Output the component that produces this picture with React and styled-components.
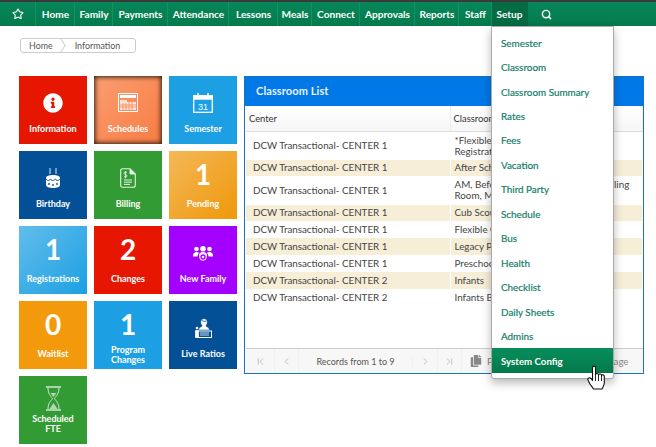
import React from "react";
import styled, { createGlobalStyle } from "styled-components";
import { Star, Search, ChevronLeft, ChevronRight, ChevronFirst, ChevronLast } from "lucide-react";
import { FaInfoCircle, FaCopy } from "react-icons/fa";

const Global = createGlobalStyle`
  html, body { margin: 0; padding: 0; background: #fff; }
  body { font-family: Lato, "Open Sans", sans-serif; overflow: hidden; }
`;

const Page = styled.div`
  position: relative;
  width: 656px;
  height: 447px;
  overflow: hidden;
`;

const NavBar = styled.nav`
  display: flex;
  height: 24px;
  border-top: 2px solid #3a3a3a;
  background: linear-gradient(#07875a, #047a4c);
`;

const NavItem = styled.a`
  display: flex;
  align-items: center;
  justify-content: center;
  width: ${(p) => p.$w}px;
  padding-left: ${(p) => (p.$plain ? 0 : 1)}px;
  color: #fff;
  font-size: 10.1px;
  font-weight: 700;
  border-right: 1px solid ${(p) => (p.$plain ? "transparent" : "#0d9563")};
  box-sizing: border-box;
  background: ${(p) => (p.$active ? "#056b42" : "transparent")};
`;

const Content = styled.main`
  padding: 12px 12px 0 19px;
`;

const Crumbs = styled.div`
  display: flex;
  align-items: center;
  width: 116px;
  height: 15px;
  margin-left: 1px;
  box-sizing: border-box;
  border: 1px solid #ccc;
  border-radius: 3px;
  font-size: 8.9px;
  color: #555;
  overflow: hidden;
`;

const Crumb = styled.span`
  padding-left: ${(p) => p.$pad}px;
`;

const CrumbArrow = styled.i`
  width: 10px;
  height: 10px;
  margin-left: 1px;
  transform: rotate(45deg) skew(12deg, 12deg);
  border-top: 1px solid #ccc;
  border-right: 1px solid #ccc;
  flex: none;
`;

const Columns = styled.div`
  display: flex;
  gap: 7px;
  margin-top: 23px;
`;

const Tiles = styled.div`
  display: grid;
  grid-template-columns: repeat(3, 68px);
  grid-auto-rows: 68px;
  gap: 7px;
  align-content: start;
`;

const Tile = styled.div`
  display: flex;
  flex-direction: column;
  align-items: center;
  color: #fff;
  background: ${(p) => p.$bg};
  box-shadow: ${(p) => (p.$hover ? "inset 0 0 5px 1px #2a1a10" : "none")};
`;

const TileTop = styled.div`
  display: flex;
  align-items: center;
  justify-content: center;
  height: ${(p) => (p.$short ? 38 : 46)}px;
  flex: none;
  padding-top: ${(p) => (p.$short ? 6 : p.$icon ? 8 : 0)}px;
  box-sizing: border-box;
`;

const TileNumber = styled.span`
  font-size: 28px;
  font-weight: 700;
  line-height: 1;
`;

const TileLabel = styled.div`
  font-size: 9px;
  font-weight: 700;
  line-height: 10px;
  text-align: center;
  margin-top: ${(p) => p.$top}px;
`;

const Panel = styled.section`
  display: flex;
  flex-direction: column;
  width: 400px;
  height: 298px;
  box-sizing: border-box;
  border: 1px solid #1d72bd;
`;

const PanelHead = styled.header`
  height: 29px;
  flex: none;
  display: flex;
  align-items: center;
  padding: 0 0 2px 11px;
  box-sizing: border-box;
  background: #0078e8;
  color: #e8f3ff;
  font-size: 11px;
  font-weight: 700;
  letter-spacing: 0.1px;
`;

const Table = styled.table`
  table-layout: fixed;
  width: calc(100% - 1px);
  margin: 0 0 0 1px;
  border-collapse: collapse;
  font-size: 9.8px;
  color: #444;
  flex: none;
`;

const Th = styled.th`
  height: 25px;
  padding: 0 0 0 3px;
  text-align: left;
  font-weight: 400;
  font-size: 9.4px;
  color: #333;
  background: linear-gradient(#fff, #f6f6f6);
  border-bottom: 1px solid #ddd;
  border-right: 1px solid #eee;
`;

const Tr = styled.tr`
  height: ${(p) => p.$h}px;
  background: ${(p) => (p.$alt ? "#f7eed8" : "#fff")};
`;

const Td = styled.td`
  padding: 0 0 0 ${(p) => p.$pad}px;
  line-height: 11px;
  white-space: nowrap;
  overflow: hidden;
  border-right: 1px solid #fff;
`;

const Spacer = styled.div`
  flex: 1;
`;

const Pager = styled.footer`
  display: flex;
  align-items: center;
  height: 24px;
  margin-left: 1px;
  flex: none;
  border-top: 1px solid #ccc;
  background: #f7f7f7;
  color: #555;
  font-size: 9px;
`;

const PagerCell = styled.div`
  display: flex;
  align-items: center;
  justify-content: center;
  width: ${(p) => p.$w}px;
  height: 100%;
  flex: none;
  box-sizing: border-box;
  color: #bbb;
  border-right: 1px solid #f0f0f0;
`;

const PagerText = styled.div`
  width: 114px;
  flex: none;
  box-sizing: border-box;
  text-align: center;
  white-space: nowrap;
  border-right: 1px solid #f0f0f0;
`;

const Copy = styled.div`
  display: flex;
  align-items: center;
  gap: 5px;
  padding-left: 8px;
  color: #888;
  font-size: 9.7px;
  white-space: nowrap;
`;

const Menu = styled.ul`
  position: absolute;
  top: 26px;
  left: 491px;
  width: 123px;
  height: 353px;
  box-sizing: border-box;
  margin: 0;
  padding: 3.5px 0 0;
  list-style: none;
  background: #fff;
  border: 1px solid #aaa;
  border-radius: 0 0 3px 3px;
  box-shadow: 0 4px 10px rgba(0, 0, 0, 0.28);
`;

const MenuItem = styled.li`
  display: flex;
  align-items: center;
  height: 24.45px;
  box-sizing: border-box;
  padding: ${(p) => (p.$active ? 1 : 0)}px 0 0 9px;
  font-size: ${(p) => (p.$active ? 9.7 : 9.9)}px;
  color: ${(p) => (p.$active ? "#fff" : "#14806a")};
  -webkit-text-stroke: ${(p) => (p.$active ? 0 : 0.2)}px;
  background: ${(p) => (p.$active ? "linear-gradient(#078d5b, #04794b)" : "transparent")};
  font-weight: ${(p) => (p.$active ? 700 : 400)};
`;

const Cursor = styled.svg`
  position: absolute;
  left: 587px;
  top: 365px;
`;

const navItems = [
  ["Home", 39], ["Family", 38], ["Payments", 55], ["Attendance", 61], ["Lessons", 49],
  ["Meals", 34], ["Connect", 48], ["Approvals", 55], ["Reports", 44], ["Staff", 33],
];

const CalendarGrid = () => (
  <svg width="20" height="20" viewBox="0 0 20 20">
    <rect x="0.5" y="0.5" width="19" height="18" fill="none" stroke="#fff" />
    <rect x="2" y="2" width="16" height="3" fill="#fff" />
    <path d="M2 7h7v3H2zM9 9h9v8H2v-7h7z" fill="#fde3d4" />
    <path d="M2 12h16M2 14h16M5 10v7M8 10v7M11 9v8M14 9v8" stroke="#f8885a" strokeWidth="0.8" />
  </svg>
);

const CalendarIcon = () => (
  <svg width="20" height="20" viewBox="0 0 20 20">
    <rect x="0.7" y="2.7" width="18.6" height="16.6" fill="none" stroke="#fff" strokeWidth="1.3" />
    <rect x="0.7" y="2.7" width="18.6" height="4" fill="#fff" />
    <path d="M5 0v5M15 0v5" stroke="#fff" strokeWidth="1.4" />
    <text x="10" y="16.5" textAnchor="middle" fontSize="9" fontFamily="Liberation Sans, sans-serif" fill="#fff">31</text>
  </svg>
);

const CakeIcon = () => (
  <svg width="16" height="21" viewBox="0 0 16 21">
    <path d="M5 0v6M11 0v6" stroke="#dfe8f3" strokeWidth="1" />
    <path d="M1 10c0-2 3-3 7-3s7 1 7 3v7c0 2-3 3-7 3s-7-1-7-3z" fill="#fff" />
    <path d="M1 11c2 2 3 2 4.500 0 1.500 2 3 2 5 0 1 2 3 2 4.500 0" stroke="#045097" fill="none" />
    <circle cx="4" cy="16" r="0.9" fill="#045097" />
    <circle cx="8" cy="17" r="0.9" fill="#045097" />
    <circle cx="12" cy="16" r="0.9" fill="#045097" />
  </svg>
);

const BillIcon = () => (
  <svg width="16" height="20" viewBox="0 0 16 20" fill="none" stroke="#e4f3e4">
    <path d="M2.500 0.700h7.500l5.300 5.300v11a2.300 2.300 0 0 1-2.300 2.300H2.500a1.800 1.800 0 0 1-1.800-1.800V2.500a1.800 1.800 0 0 1 1.800-1.800z" strokeWidth="1.1" />
    <path d="M10 1l5 5h-5z" fill="#e4f3e4" />
    <path d="M7 4.500c-1-.8-3-.6-3 .8s3 1 3 2.500-2 1.600-3 .8M5.400 3v7.500" strokeWidth="0.9" />
    <path d="M4 12h8M4 14.200h8M4 16.400h6" strokeWidth="1" />
  </svg>
);

const FamilyIcon = () => (
  <svg width="20" height="15" viewBox="0 0 20 15" fill="#fff">
    <circle cx="3.500" cy="3" r="2.300" />
    <circle cx="16.500" cy="3" r="2.300" />
    <circle cx="10" cy="2.800" r="2.800" />
    <path d="M0 10c0-3 1.500-4 3.500-4s2.500 1 2.500 1-1.500 1.500-1.500 3.500H0zM20 10c0-3-1.500-4-3.500-4S14 7 14 7s1.500 1.500 1.500 3.500H20zM6 9c0-2 2-3 4-3s4 1 4 3-1.500 1-4 1-4 1-4-1z" />
    <circle cx="10" cy="11" r="3.300" fill="#a400ff" stroke="#fff" />
    <circle cx="10" cy="11" r="1.300" />
  </svg>
);

const RatioIcon = () => (
  <svg width="17" height="20" viewBox="0 0 17 20" fill="#fff">
    <path d="M9 0.700c-2 0-3.300 1.500-3.300 3.300 0 1 .3 2.300 1 3l.3 1.200C5 9 3.800 10 3.500 12h11c-.2-2-1.500-3-3.500-3.800l.3-1.200c.7-.7 1-2 1-3 0-1.800-1.300-3.300-3.300-3.300z" stroke="#045097" strokeWidth="0.5" />
    <path d="M6.800 2.500c1.500 1 3 1 4.500.5" stroke="#045097" fill="none" strokeWidth="0.8" />
    <circle cx="2" cy="10" r="1.300" />
    <rect x="2.500" y="13" width="14" height="6.500" fill="none" stroke="#fff" />
    <path d="M0.500 12.500h3v7h-3zM5 15h9M5 17h9" stroke="#fff" strokeWidth="0.8" />
  </svg>
);

const GlassIcon = () => (
  <svg width="17" height="25" viewBox="0 0 17 25" fill="none" stroke="#cfe8cf">
    <path d="M1 1h15M1 24h15" strokeWidth="1.600" />
    <path d="M3 2c0 6 3 8 4.500 10.500C6 15 3 17 3 23M14 2c0 6-3 8-4.500 10.500C11 15 14 17 14 23" strokeWidth="1" />
    <path d="M5.500 7h6l-3 4zM8.500 17l4 6h-8z" fill="#cfe8cf" stroke="none" opacity="0.8" />
  </svg>
);

const tiles = [
  { label: "Information", bg: "#e61600", icon: <FaInfoCircle size={20} /> },
  { label: "Schedules", bg: "linear-gradient(135deg, #fb9d70, #f87c43)", icon: <CalendarGrid />, hover: true },
  { label: "Semester", bg: "#1ca0e3", icon: <CalendarIcon /> },
  { label: "Birthday", bg: "#045097", icon: <CakeIcon /> },
  { label: "Billing", bg: "#339b34", icon: <BillIcon /> },
  { label: "Pending", bg: "linear-gradient(135deg, #f4b858, #ef980a)", num: 1 },
  { label: "Registrations", bg: "linear-gradient(135deg, #62bdeb, #1ca0e3)", num: 1 },
  { label: "Changes", bg: "#e61600", num: 2 },
  { label: "New Family", bg: "#a400ff", icon: <FamilyIcon /> },
  { label: "Waitlist", bg: "#f29a0b", num: 0 },
  { label: ["Program", "Changes"], bg: "#1ca0e3", num: 1, top: -2 },
  { label: "Live Ratios", bg: "#045097", icon: <RatioIcon /> },
  { label: ["Scheduled", "FTE"], bg: "#339b34", icon: <GlassIcon />, short: true, top: 0 },
];

const rows = [
  ["DCW Transactional- CENTER 1", ["*Flexible Care", "Registration"], 28],
  ["DCW Transactional- CENTER 1", ["After School"], 16],
  ["DCW Transactional- CENTER 1", ["AM, Before School, After School + Billing", "Room, Morning"], 29],
  ["DCW Transactional- CENTER 1", ["Cub Scouts"], 16],
  ["DCW Transactional- CENTER 1", ["Flexible Care"], 17],
  ["DCW Transactional- CENTER 1", ["Legacy Program"], 17],
  ["DCW Transactional- CENTER 1", ["Preschool"], 17],
  ["DCW Transactional- CENTER 2", ["Infants"], 17],
  ["DCW Transactional- CENTER 2", ["Infants B"], 17],
];

const altRows = [1, 3, 5, 7];

const menuItems = [
  "Semester", "Classroom", "Classroom Summary", "Rates", "Fees", "Vacation", "Third Party",
  "Schedule", "Bus", "Health", "Checklist", "Daily Sheets", "Admins",
];

export default function App() {
  return (
    <Page>
      <Global />
      <NavBar>
        <NavItem $w={36}>
          <Star size={12} strokeWidth={2.2} />
        </NavItem>
        {navItems.map(([name, w]) => (
          <NavItem key={name} $w={w}>{name}</NavItem>
        ))}
        <NavItem $w={36} $active $plain>Setup</NavItem>
        <NavItem $w={38} $plain>
          <Search size={11} strokeWidth={3.2} />
        </NavItem>
      </NavBar>
      <Content>
        <Crumbs>
          <Crumb $pad={8}>Home</Crumb>
          <CrumbArrow />
          <Crumb $pad={10}>Information</Crumb>
        </Crumbs>
        <Columns>
          <Tiles>
            {tiles.map((t) => {
              const lines = Array.isArray(t.label) ? t.label : [t.label];
              const isNum = t.num !== undefined;
              return (
                <Tile key={lines.join(" ")} $bg={t.bg} $hover={t.hover}>
                  <TileTop $short={t.short} $icon={!isNum}>
                    {isNum ? <TileNumber>{t.num}</TileNumber> : t.icon}
                  </TileTop>
                  <TileLabel $top={t.top ?? 2}>
                    {lines.map((l) => (
                      <div key={l}>{l}</div>
                    ))}
                  </TileLabel>
                </Tile>
              );
            })}
          </Tiles>
          <Panel>
            <PanelHead>Classroom List</PanelHead>
            <Table>
              <colgroup>
                <col width="204" />
                <col />
              </colgroup>
              <thead>
                <tr>
                  <Th>Center</Th>
                  <Th>Classroom</Th>
                </tr>
              </thead>
              <tbody>
                {rows.map(([center, room, h], i) => (
                  <Tr key={i} $h={h} $alt={altRows.includes(i)}>
                    <Td $pad={7}>{center}</Td>
                    <Td $pad={4}>
                      {room.map((l) => (
                        <div key={l}>{l}</div>
                      ))}
                    </Td>
                  </Tr>
                ))}
              </tbody>
            </Table>
            <Spacer />
            <Pager>
              <PagerCell $w={29}><ChevronFirst size={11} /></PagerCell>
              <PagerCell $w={24}><ChevronLeft size={11} /></PagerCell>
              <PagerText>Records from 1 to 9</PagerText>
              <PagerCell $w={25}><ChevronRight size={11} /></PagerCell>
              <PagerCell $w={24}><ChevronLast size={11} /></PagerCell>
              <Copy>
                <FaCopy size={12} />
                Print All Records on Current Page
              </Copy>
            </Pager>
          </Panel>
        </Columns>
      </Content>
      <Menu>
        {menuItems.map((m) => (
          <MenuItem key={m}>{m}</MenuItem>
        ))}
        <MenuItem $active>System Config</MenuItem>
      </Menu>
      <Cursor width="20" height="28" viewBox="0 0 20 28">
        <path
          d="M5.500 2.500c0-1.800 3-1.800 3 0v7c.5-1.300 3-1.300 3 .3.500-1.200 3-1 3 .6.500-1 2.800-.8 2.800 1v6.100c0 3-1.300 4.500-2.300 6.500H6.500c-1-2-2.200-3-3.500-5L1 15c-.8-1.600 1.500-3 3-1.300l1.500 1.800z"
          fill="#fff"
          stroke="#111"
          strokeWidth="1.100"
          strokeLinejoin="round"
        />
        <path d="M8.500 10v6M11.500 10v6M14.500 11v5" stroke="#111" strokeWidth="0.9" />
      </Cursor>
    </Page>
  );
}
